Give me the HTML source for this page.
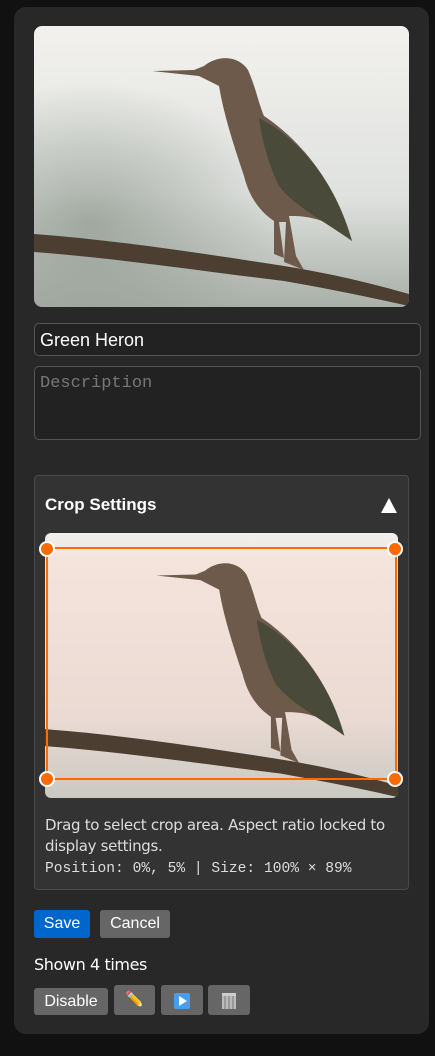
<!DOCTYPE html>
<html><head><style>
*{box-sizing:border-box;margin:0;padding:0}
body{width:435px;height:1056px;background:#111;font-family:"Liberation Sans",sans-serif;position:relative;overflow:hidden}
.card{position:absolute;left:14px;top:7px;width:415px;height:1027px;background:#282828;border-radius:12px}
.abs{position:absolute}
.inp{position:absolute;left:34px;width:387px;border:1px solid #555;border-radius:5px;background:#222}
.btn{position:absolute;border-radius:3px;color:#fff;font-size:16px;text-align:center;background:#666}
</style></head><body>
<div class="card"></div>
<svg class="abs" style="left:34px;top:26px;border-radius:8px" width="375" height="281" viewBox="0 0 375 281">
<defs><linearGradient id="g" x1="0" y1="0" x2="0" y2="1"><stop offset="0" stop-color="#f2f1ee"/><stop offset=".6" stop-color="#e0e2df"/><stop offset="1" stop-color="#a9b0a8"/></linearGradient>
<radialGradient id="r" cx=".15" cy=".7" r=".5"><stop offset="0" stop-color="#7e8a7e" stop-opacity=".6"/><stop offset="1" stop-color="#7e8a7e" stop-opacity="0"/></radialGradient></defs>
<rect width="375" height="281" fill="url(#g)"/><rect width="375" height="281" fill="url(#r)"/>
<path d="M0 208 C80 214 160 226 250 240 C300 248 340 258 375 268 L375 280 C330 270 290 262 250 255 C160 244 80 232 0 226Z" fill="#4d3e32"/>
<path d="M118 45 L160 44 L170 40 C185 28 205 30 214 44 C222 62 224 76 230 90 C260 110 300 150 318 215 L300 200 C280 190 265 190 255 190 L262 230 L270 244 L250 236 L252 196 L245 196 L250 232 L240 228 L240 195 C225 185 215 170 210 150 C200 120 190 90 185 60 L165 50 Z" fill="#6e5a4a"/>
<path d="M225 92 C260 110 300 150 318 215 C290 195 260 180 245 160 C235 140 228 115 225 92Z" fill="#4a4a3a"/>
</svg>
<div class="inp" style="top:323px;height:33px;color:#fff;font-size:18px;padding:6px 5px">Green Heron</div>
<div class="inp" style="top:366px;height:74px;color:#777;font-family:'Liberation Mono',monospace;font-size:17px;padding:7px 5px">Description</div>
<div class="abs" style="left:34px;top:475px;width:375px;height:415px;background:#333;border:1px solid #4a4a4a;border-radius:4px"></div>
<div class="abs" style="left:45px;top:495px;color:#fff;font-weight:bold;font-size:17px">Crop Settings</div>
<div class="abs" style="left:381px;top:498px;width:0;height:0;border-left:8px solid transparent;border-right:8px solid transparent;border-bottom:15px solid #fff"></div>
<svg class="abs" style="left:45px;top:533px;border-radius:6px" width="353" height="265" viewBox="0 0 375 281" preserveAspectRatio="none">
<defs><linearGradient id="g2" x1="0" y1="0" x2="0" y2="1"><stop offset="0" stop-color="#f1f0ee"/><stop offset=".1" stop-color="#f4e4dc"/><stop offset=".7" stop-color="#eadad3"/><stop offset="1" stop-color="#c9c9c2"/></linearGradient></defs>
<rect width="375" height="281" fill="url(#g2)"/>
<path d="M0 208 C80 214 160 226 250 240 C300 248 340 258 375 268 L375 280 C330 270 290 262 250 255 C160 244 80 232 0 226Z" fill="#4d3e32"/>
<path d="M118 45 L160 44 L170 40 C185 28 205 30 214 44 C222 62 224 76 230 90 C260 110 300 150 318 215 L300 200 C280 190 265 190 255 190 L262 230 L270 244 L250 236 L252 196 L245 196 L250 232 L240 228 L240 195 C225 185 215 170 210 150 C200 120 190 90 185 60 L165 50 Z" fill="#6e5a4a"/>
<path d="M225 92 C260 110 300 150 318 215 C290 195 260 180 245 160 C235 140 228 115 225 92Z" fill="#4a4a3a"/>
</svg>
<div class="abs" style="left:46px;top:547px;width:351px;height:233px;border:2px solid #ff6a00"></div>
<div class="abs" style="left:39px;top:541px;width:16px;height:16px;border-radius:50%;background:#ff6a00;border:2px solid #fff"></div>
<div class="abs" style="left:387px;top:541px;width:16px;height:16px;border-radius:50%;background:#ff6a00;border:2px solid #fff"></div>
<div class="abs" style="left:39px;top:771px;width:16px;height:16px;border-radius:50%;background:#ff6a00;border:2px solid #fff"></div>
<div class="abs" style="left:387px;top:771px;width:16px;height:16px;border-radius:50%;background:#ff6a00;border:2px solid #fff"></div>
<div class="abs" style="left:45px;top:815px;width:350px;color:#ddd;font-size:15px;line-height:21px;font-family:'DejaVu Sans',sans-serif;letter-spacing:-.3px">Drag to select crop area. Aspect ratio locked to display settings.</div>
<div class="abs" style="left:45px;top:861px;color:#ddd;font-size:14.6px;font-family:'Liberation Mono',monospace">Position: 0%, 5% | Size: 100% × 89%</div>
<div class="btn" style="left:34px;top:910px;width:56px;height:28px;line-height:28px;background:#0066cc">Save</div>
<div class="btn" style="left:100px;top:910px;width:70px;height:28px;line-height:28px">Cancel</div>
<div class="abs" style="left:34px;top:955px;color:#fff;font-size:16px;font-family:'DejaVu Sans',sans-serif;letter-spacing:-.4px">Shown 4 times</div>
<div class="btn" style="left:34px;top:988px;width:74px;height:27px;line-height:27px">Disable</div>
<div class="btn" style="left:114px;top:985px;width:41px;height:30px;line-height:30px;font-size:15px">✏️</div>
<div class="btn" style="left:161px;top:985px;width:42px;height:30px"><div style="margin:8px auto;width:16px;height:16px;background:#4a9de8;border-radius:2px;position:relative"><div style="position:absolute;left:5px;top:3px;border-left:8px solid #fff;border-top:5px solid transparent;border-bottom:5px solid transparent"></div></div></div>
<div class="btn" style="left:208px;top:985px;width:42px;height:30px"><div style="margin:8px auto;width:14px;height:16px;background:repeating-linear-gradient(90deg,#bbb 0 2px,#999 2px 4px);border-top:3px solid #ccc"></div></div>
</body></html>
